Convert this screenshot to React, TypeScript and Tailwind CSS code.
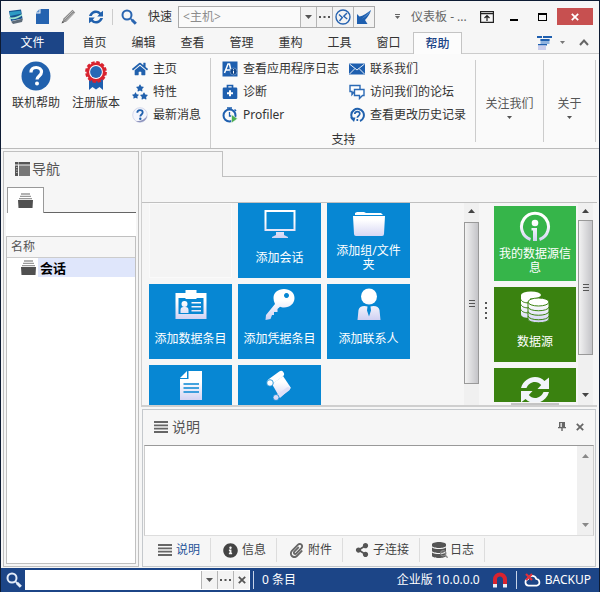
import React, { useState } from 'react';
import { FaDatabase, FaHome, FaInfoCircle, FaPaperclip, FaSearch, FaShareAlt, FaStar } from 'react-icons/fa';

type IconProps = { className?: string };

/* Small glyphs */

const Caret = ({ className = '' }: IconProps) => (
  <svg viewBox="0 0 7 4" className={`h-1 w-[7px] shrink-0 ${className}`} fill="currentColor">
    <path d="M0 0h7L3.5 4z" />
  </svg>
);

const CaretUp = ({ className = '' }: IconProps) => (
  <svg viewBox="0 0 7 4" className={`h-1 w-[7px] shrink-0 ${className}`} fill="currentColor">
    <path d="M0 4h7L3.5 0z" />
  </svg>
);

const TinyCaret = () => (
  <svg viewBox="0 0 5 3" className="h-[3px] w-[5px] shrink-0" fill="currentColor">
    <path d="M0 0h5L2.5 3z" />
  </svg>
);

const Dots = () => (
  <svg viewBox="0 0 11 2" className="h-[2px] w-[11px]" fill="currentColor">
    <path d="M0 0h2v2H0zM4.5 0h2v2h-2zM9 0h2v2H9z" />
  </svg>
);

const Cross = ({ className = '' }: IconProps) => (
  <svg viewBox="0 0 10 10" className={`size-2 shrink-0 ${className}`} fill="none" stroke="currentColor" strokeWidth="2.2">
    <path d="M1 1l8 8M9 1L1 9" />
  </svg>
);

const Lines = ({ className = '' }: IconProps) => (
  <svg viewBox="0 0 14 12" className={`h-3 w-3.5 shrink-0 ${className}`} stroke="currentColor" strokeWidth="1.8">
    <path d="M0 1h14M0 4.3h14M0 7.7h14M0 11h14" />
  </svg>
);

const SyncIcon = ({ className = '', fill = 'currentColor' }: IconProps & { fill?: string }) => (
  <svg viewBox="0 0 30 28" className={`shrink-0 ${className}`} fill={fill}>
    <path d="M1 12C3 5 9 1 15 1c4 0 7 1.5 9.5 4L29 1.5V13H17.500l3.700-4C19.5 7 17.5 6 15 6c-4 0-7 2.5-8.5 6z" />
    <path d="M29 16c-2 7-8 11-14 11-4 0-7-1.5-9.5-4L1 26.500V15h11.500l-3.700 4c1.7 2 3.7 3 6.200 3 4 0 7-2.5 8.5-6z" />
  </svg>
);

const AppLogo = () => (
  <svg viewBox="0 0 16 16" className="size-4 shrink-0">
    <path d="M1 2l12-1.500 1.500 9L3 12z" fill="#17528f" />
    <path d="M1.500 3l11-1.300.5 3L2 7z" fill="#2d9bc4" />
    <path d="M1 8c4 1.500 8 0 13-3l.3 1.500C10 9.500 6 11 1.500 9.800z" fill="#9fe6cf" />
    <path d="M3 12.500l12-3-1 3.500-9 2z" fill="#5d6b78" />
  </svg>
);

const NewFile = () => (
  <svg viewBox="0 0 13 15" className="h-[15px] w-[13px] shrink-0">
    <path d="M4.500 0H13v15H0V4.500h4.500z" fill="#2563b0" />
    <path d="M3.500 0v3.500H0z" fill="#5f92cf" />
  </svg>
);

const Pencil = () => (
  <svg viewBox="0 0 15 15" className="size-[15px] shrink-0">
    <path d="M1 14l1.500-4.500L11.500.8 14.200 3.500 5.500 12.500z" fill="#8a8a8a" />
    <path d="M3.500 10.500l8.500-8.500M4.800 11.800l8-8" stroke="#ddd" strokeWidth=".6" />
    <path d="M.5 14.500l1-2.500 1.500 1.500z" fill="#555" />
  </svg>
);

const Magnifier = ({ className = '' }: IconProps) => (
  <svg viewBox="0 0 16 16" className={`size-4 shrink-0 ${className}`} fill="none" stroke="currentColor">
    <circle cx="6" cy="6" r="4.500" strokeWidth="2" />
    <path d="M9 9l2 2" strokeWidth="1.6" />
    <path d="M10.800 10.800l4 4" strokeWidth="3" />
  </svg>
);

const RemoteIcon = () => (
  <svg viewBox="0 0 16 16" className="size-4" fill="none" stroke="#2763b0" strokeWidth="1.4">
    <circle cx="8" cy="8" r="7" />
    <path d="M4 5.500L7.300 8.500 4.500 12M12 4L8.800 7.300 12.200 10" />
  </svg>
);

const ArrowSwoosh = () => (
  <svg viewBox="0 0 16 16" className="size-4" fill="#1e5faf">
    <path d="M1 15V5l2.500 2.500C7 7 11 4 15 1c-1 4-3.500 7.500-6 10l2.500 4z" />
    <path d="M15 1C12 4.500 9 7.500 5.500 10c4-2 7.500-5 9.500-9z" fill="#79a5d8" />
  </svg>
);

const RibbonToggle = () => (
  <svg viewBox="0 0 14 12" className="h-3 w-3.5" fill="none" stroke="#222" strokeWidth="1.2">
    <path d="M.6.6h12.800v10.800H.6zM.6 2.600h12.800M7 10V5M4.500 7L7 4.600 9.500 7" />
  </svg>
);

const LayoutIcon = () => (
  <svg viewBox="0 0 16 16" className="size-4">
    <path d="M1 1h5v2H1zM7 1h9v2H7z" fill="#1e5faf" />
    <path d="M4.500 4h9v5h-9z" fill="#8fb2de" />
    <path d="M4.500 4h9v2h-9zM2 9h9v1.500H2z" fill="#1e5faf" />
    <path d="M2 10.500h8V15H2z" fill="#c9cdec" />
  </svg>
);

/* Ribbon icons */

const HelpBig = () => (
  <svg viewBox="0 0 30 30" className="size-[30px]">
    <circle cx="15" cy="15" r="14.500" fill="#2161ad" />
    <path d="M10 11.500c0-3.500 2.300-5 5.200-5s5.300 1.600 5.300 4.600c0 3.700-4.500 4-4.500 7.400" fill="none" stroke="#fff" strokeWidth="3.2" />
    <circle cx="16" cy="22.500" r="2" fill="#fff" />
  </svg>
);

const Rosette = () => (
  <svg viewBox="0 0 24 30" className="h-[30px] w-6">
    <path d="M5 18v11l3.500-3 3.500 2.500 3.500-2.500 3.500 3V18z" fill="#1e5faf" />
    <circle cx="12" cy="11" r="9.700" fill="none" stroke="#d8232f" strokeWidth="2.4" strokeDasharray="3.4 1.680" />
    <circle cx="12" cy="11" r="9.600" fill="#d8232f" />
    <circle cx="12" cy="11" r="6.900" fill="#fff" />
    <circle cx="12" cy="11" r="5.900" fill="#2768b5" />
  </svg>
);

const Stars = () => (
  <span className="flex size-4 shrink-0 flex-col items-center text-[#2161ad]">
    <FaStar className="size-2" />
    <span className="flex w-4 justify-between">
      <FaStar className="size-[7px]" />
      <FaStar className="size-2" />
    </span>
  </span>
);

const NewsIcon = () => (
  <svg viewBox="0 0 16 16" className="size-4 shrink-0">
    <circle cx="8" cy="8" r="7.300" fill="#f4f5fc" stroke="#d5d8ea" />
    <path d="M15 8.500a7 7 0 0 1-11 5.500c4.500.5 9-1.500 11-5.500z" fill="#8f95bd" />
    <path d="M5.300 5.800c0-1.800 1.200-2.600 2.700-2.600s2.700.8 2.700 2.300c0 1.900-2.400 2-2.400 4" fill="none" stroke="#2161ad" strokeWidth="1.800" />
    <circle cx="8.300" cy="11.800" r="1.200" fill="#2161ad" />
  </svg>
);

const LogIcon = () => (
  <svg viewBox="0 0 16 16" className="size-4 shrink-0">
    <path d="M.5.5h15v15H.5z" fill="#1e5faf" />
    <path d="M2.500 12L6 3h1.500L9.500 12M4 9h4" fill="none" stroke="#fff" strokeWidth="1.5" />
    <circle cx="11.500" cy="10.500" r="3.500" fill="#12468a" stroke="#6d9bd1" strokeWidth=".8" />
    <path d="M11.500 8.300v1M11.500 10v2.500" stroke="#fff" />
  </svg>
);

const FirstAid = () => (
  <svg viewBox="0 0 16 16" className="size-4 shrink-0">
    <path d="M5.500 4V1.500h5V4" fill="none" stroke="#1e5faf" strokeWidth="1.7" />
    <rect x=".7" y="3.500" width="14.600" height="11.500" rx="1.200" fill="#1e5faf" />
    <path d="M8 6.200v6M5 9.200h6" stroke="#fff" strokeWidth="2" />
  </svg>
);

const ProfilerIcon = () => (
  <svg viewBox="0 0 16 16" className="size-4 shrink-0" fill="none">
    <path d="M5 1h5M7.500 1v2M12.500 2.500l1.500 1.500" stroke="#1e5faf" strokeWidth="1.5" />
    <circle cx="7.500" cy="8.500" r="6" stroke="#1e5faf" strokeWidth="2" />
    <path d="M7.500 5v4h2" stroke="#1e5faf" strokeWidth="1.3" />
    <path d="M9.500 7.500l6 4.300-6 4.200z" fill="#4caf50" stroke="#fafafa" strokeWidth=".6" />
  </svg>
);

const MailIcon = () => (
  <svg viewBox="0 0 16 12" className="h-3 w-4 shrink-0">
    <path d="M0 .5h16v11H0z" fill="#1e5faf" />
    <path d="M.5 1l7.500 6L15.500 1M.5 11l5.500-5.500M15.500 11L10 5.500" fill="none" stroke="#fff" strokeWidth=".9" />
  </svg>
);

const ForumIcon = () => (
  <svg viewBox="0 0 16 16" className="size-4 shrink-0" fill="#fff" stroke="#2b6ab5" strokeWidth="1.4">
    <path d="M1 1.500h10v6H5.500L3 10.500v-3H1z" />
    <path d="M5.500 5.500H15v6h-1.500l-3 3v-3h-5z" />
  </svg>
);

const HistoryIcon = () => (
  <svg viewBox="0 0 16 16" className="size-4 shrink-0" fill="none" stroke="#2161ad">
    <path d="M4 12.500A6.300 6.300 0 1 1 11 14" strokeWidth="2" />
    <path d="M5.800 7c0-3.200 5-3 5-.2 0 2-2.500 2-2.500 4M8.300 12v2" strokeWidth="1.7" />
    <path d="M1 10.500h5.500L5 15z" fill="#2161ad" stroke="none" />
  </svg>
);

/* Panel icons */

const NavIcon = () => (
  <svg viewBox="0 0 15 14" className="h-3.5 w-[15px] shrink-0">
    <path d="M0 0h3v2.500H0zM3.500 0H15v2.500H3.500zM0 3.500h3V14H0z" fill="#555" />
    <path d="M4 3.500h11V14H4z" fill="#777" />
    <path d="M1 5.500h1.500M1 8h1.500M1 10.500h1.500" stroke="#ddd" strokeWidth=".7" />
  </svg>
);

const StackIcon = () => (
  <svg viewBox="0 0 15 15" className="size-[15px] shrink-0">
    <path d="M3 1h9M2 3.300h11M1 5.600h13" stroke="#999" strokeWidth="1.3" />
    <path d="M0 7h15l-.5 8H.5z" fill="#505050" />
  </svg>
);

const PinIcon = () => (
  <svg viewBox="0 0 8 9" className="h-[9px] w-2" fill="#666">
    <path d="M1 0h6v5h1v1.300H4.700V9H3.300V6.300H0V5h1zM2.500 1v4h1.300V1z" />
  </svg>
);

const LogsTabIcon = () => (
  <span className="relative flex text-[#555]">
    <FaDatabase className="h-4 w-3.5" />
    <FaSearch className="absolute -right-0.5 bottom-0 size-2 text-[#888]" />
  </span>
);

const MagnetIcon = () => (
  <svg viewBox="0 0 16 16" className="size-4 shrink-0" fill="none" strokeWidth="4">
    <path d="M3 12V7.500a5 5 0 0 1 10 0V12" stroke="#d8232f" />
    <path d="M3 12v3.500M13 12v3.500" stroke="#e8ecf5" />
  </svg>
);

const CloudIcon = () => (
  <svg viewBox="0 0 17 14" className="h-3.5 w-[17px] shrink-0" fill="none">
    <path d="M4.500 12.700a3.300 3.300 0 0 1-.5-6.500 4.300 4.300 0 0 1 8.300-.2 3.400 3.400 0 0 1 .5 6.700z" stroke="#fff" strokeWidth="1.7" />
    <path d="M2 1l6 6M8 1L2 7" stroke="#e0303c" strokeWidth="2.2" />
  </svg>
);

/* Tile icons, all shaded white to lavender */

function Glyph({ children }: { children: React.ReactNode }) {
  return (
    <svg viewBox="0 0 32 32" className="size-8 shrink-0" fill="url(#shade)">
      <defs>
        <linearGradient id="shade" x1="0" y1="0" x2="0" y2="32" gradientUnits="userSpaceOnUse">
          <stop offset=".4" stopColor="#fff" />
          <stop offset="1" stopColor="#cfd0f2" />
        </linearGradient>
      </defs>
      {children}
    </svg>
  );
}

const glyphs = {
  monitor: (
    <Glyph>
      <path fillRule="evenodd" d="M.5 3h31v21H.5zM2.500 5v17h27V5zM12 25h8v3l4 2v1H8v-1l4-2z" />
    </Glyph>
  ),
  folder: (
    <Glyph>
      <path d="M2 8V6l2-1h7l2 1h15l2 2zM0 9h32l-1 18q0 2-2 2H3q-2 0-2-2z" />
    </Glyph>
  ),
  badge: (
    <Glyph>
      <path fillRule="evenodd" d="M.5 5h10V2h11v3h10v26H.5zm3 5v16h25V10h-7v1h-11v-1z" />
      <circle cx="9.500" cy="16" r="3" />
      <path d="M5.500 25v-3q0-3 3-3h2q3 0 3 3v3zM16.500 14H26v1.400h-9.500zM16.500 18H26v1.400h-9.500zM16.500 22H26v1.400h-9.500z" />
    </Glyph>
  ),
  key: (
    <Glyph>
      <path
        fillRule="evenodd"
        d="M20 1c6 0 10.500 3.500 10.500 9S26 19.500 20 19.500c-2 0-3-.4-4-.8L13.500 21v3H10v3H8l-1.500 4-5 1 .5-5L11 16c-1-2-1.500-4-1.500-6C9.500 4.500 14 1 20 1zm2.500 4a2.500 2.500 0 1 0 .01 0z"
      />
    </Glyph>
  ),
  person: (
    <Glyph>
      <circle cx="16" cy="8.500" r="8" />
      <path d="M4.500 32l1-10q1-4 6-4l3 .5-.5 4 2 6 2-6-.5-4 3-.5q5 0 6 4l1 10z" />
    </Glyph>
  ),
  document: (
    <Glyph>
      <path d="M13.500 2h13.500v29H5V10h8.500z" />
      <path d="M12 2v7H5z" fill="#fff" />
      <path d="M8.500 15h15.500M8.500 19h15.500M8.500 23h15.500" stroke="#0787d3" strokeWidth="1.3" />
    </Glyph>
  ),
  script: (
    <Glyph>
      <path d="M8 15l11-8 8 12-11 10z" />
      <path d="M6 13L17 5" stroke="#fff" strokeWidth="6" strokeLinecap="round" />
      <circle cx="6" cy="14" r="3.300" stroke="#0787d3" strokeWidth=".8" />
      <path d="M13 28l11-8" stroke="#dfe0f7" strokeWidth="4" strokeLinecap="round" />
      <circle cx="12" cy="28.500" r="3" stroke="#0787d3" strokeWidth=".8" />
    </Glyph>
  ),
  info: (
    <Glyph>
      <path d="M11.500 29.500a13.500 13.500 0 1 1 9 0" fill="none" stroke="url(#shade)" strokeWidth="3" />
      <circle cx="16" cy="13" r="3.300" />
      <path d="M12.500 18H18v13h-4V20.500h-1.500z" />
    </Glyph>
  ),
  database: (
    <Glyph>
      <path d="M2 4v19c0 3 4 4 9 4V4z" />
      <ellipse cx="12" cy="4" rx="10" ry="3.500" fill="#fff" />
      <path d="M2 8.500c1 3 5 3.500 9 3.500M2 13.500c1 3 5 3.500 9 3.500M2 18.500c1 3 5 3.500 9 3.500" fill="none" stroke="#3a8210" />
      <path d="M9 11v17c0 5 21 5 21 0V11z" stroke="#3a8210" />
      <ellipse cx="19.500" cy="11" rx="10.500" ry="4" fill="#fff" stroke="#3a8210" />
      <path d="M9 16c1 5 20 5 21 0M9 20.500c1 5 20 5 21 0M9 25c1 5 20 5 21 0" fill="none" stroke="#3a8210" />
    </Glyph>
  ),
};

const blueTiles = [
  null,
  { icon: glyphs.monitor, label: '添加会话' },
  { icon: glyphs.folder, label: '添加组/文件夹' },
  { icon: glyphs.badge, label: '添加数据条目' },
  { icon: glyphs.key, label: '添加凭据条目' },
  { icon: glyphs.person, label: '添加联系人' },
  { icon: glyphs.document, label: '' },
  { icon: glyphs.script, label: '' },
];

const greenTiles = [
  { icon: glyphs.info, label: '我的数据源信息', color: 'bg-[#36b54a]' },
  { icon: glyphs.database, label: '数据源', color: 'bg-[#3a8210]' },
  { icon: <SyncIcon className="mt-1 h-7 w-[30px]" fill="#f2f5fa" />, label: '', color: 'bg-[#3a8210]' },
];

function Tile({ icon, label, color }: { icon: React.ReactNode; label: string; color: string }) {
  return (
    <button className={`flex h-[75px] w-full flex-col items-center px-1 pt-1 pb-0.5 text-white ${color}`}>
      {icon}
      <span className="flex flex-1 items-center text-center leading-[14px]">{label}</span>
    </button>
  );
}

interface ScrollBarProps {
  thumb: string;
  margin: string;
  end?: boolean;
}

function ScrollBar({ thumb, margin, end }: ScrollBarProps) {
  return (
    <div className={`flex w-[15px] shrink-0 flex-col items-center bg-[#f0f0f0] pt-1.5 pb-2 text-[#444] ${margin}`}>
      <CaretUp />
      <div className={`flex w-full flex-col items-center justify-center gap-0.5 border border-[#999] bg-linear-to-r from-[#f2f2f2] to-[#c4c4c8] ${thumb}`}>
        <span className="h-px w-1.5 bg-[#555]" />
        <span className="h-px w-1.5 bg-[#555]" />
        <span className="h-px w-1.5 bg-[#555]" />
      </div>
      {end && <Caret className="mt-auto" />}
    </div>
  );
}

const comboButton = 'flex items-center justify-center border-l border-[#b5b5b5] bg-[#f3f3f3] text-[#555]';

function TitleBar() {
  return (
    <header className="flex h-[31px] shrink-0 items-center pr-1.5 pl-[7px]">
      <div className="flex items-center gap-3">
        <AppLogo />
        <button aria-label="新建"><NewFile /></button>
        <button aria-label="编辑"><Pencil /></button>
        <button aria-label="刷新" className="text-[#2161ad]"><SyncIcon className="h-3.5 w-4" /></button>
      </div>
      <span className="ml-2 h-4 w-px bg-[#ccc]" />
      <Magnifier className="ml-2 text-[#2a65b0]" />
      <label htmlFor="host" className="ml-[11px]">快速</label>
      <div className="ml-1.5 flex h-[22px] shrink-0 border border-[#aaa] bg-[#fafafa]">
        <input id="host" placeholder="<主机>" className="w-[121px] px-1 outline-none placeholder:text-[#8c8c8c]" />
        <button aria-label="展开" className={`w-4 ${comboButton}`}><Caret /></button>
        <button aria-label="浏览" className={`w-4 ${comboButton}`}><Dots /></button>
        <button aria-label="远程" className={`w-[21px] ${comboButton}`}><RemoteIcon /></button>
        <button aria-label="连接" className={`w-[21px] ${comboButton}`}><ArrowSwoosh /></button>
      </div>
      <button aria-label="自定义" className="ml-5 flex flex-col items-center gap-px text-[#666]">
        <span className="h-px w-[5px] bg-[#666]" />
        <TinyCaret />
      </button>
      <h1 className="ml-[11px] flex-1 truncate text-[#666]">仪表板 - ...</h1>
      <button aria-label="功能区"><RibbonToggle /></button>
      <button aria-label="最小化" className="ml-4 flex h-2 w-2 items-end"><span className="h-0.5 w-2 bg-black" /></button>
      <button aria-label="最大化" className="ml-5 h-2 w-[9px] border border-t-2 border-black" />
      <button aria-label="关闭" className="ml-2.5 flex h-[17px] w-9 items-center justify-center bg-[#c75050] text-white">
        <Cross />
      </button>
    </header>
  );
}

const menu = ['首页', '编辑', '查看', '管理', '重构', '工具', '窗口', '帮助'];

function MenuTabs() {
  const [active, setActive] = useState('帮助');
  return (
    <nav className="flex h-[22px] shrink-0">
      <button className="w-[63px] bg-[#1c4587] text-white">文件</button>
      <div className="w-1.5 border-b border-[#ccc]" />
      {menu.map(name => (
        <button
          key={name}
          onClick={() => setActive(name)}
          className={`w-[49px] ${
            name === active
              ? 'border border-b-0 border-[#c4c4c4] bg-[#fcfcfc] font-medium text-[#1c4587]'
              : 'border-b border-[#ccc]'
          }`}
        >
          {name}
        </button>
      ))}
      <div className="flex flex-1 items-center justify-end border-b border-[#ccc] pr-2.5">
        <button aria-label="布局" className="flex items-center gap-2 text-[#777]">
          <LayoutIcon />
          <TinyCaret />
        </button>
        <button aria-label="折叠" className="ml-3.5 text-[#666]">
          <svg viewBox="0 0 10 7" className="h-[7px] w-2.5" fill="none" stroke="currentColor" strokeWidth="2"><path d="M1 6l4-4.500L9 6" /></svg>
        </button>
      </div>
    </nav>
  );
}

function SmallItem({ icon, label }: { icon: React.ReactNode; label: string }) {
  return (
    <button className="flex h-[23px] items-center gap-[5px] whitespace-nowrap">
      {icon}
      <span>{label}</span>
    </button>
  );
}

function RibbonBar() {
  return (
    <section className="flex h-[95px] shrink-0 border-b border-[#bbb] bg-[#fafafa] text-[#333]">
      <button className="ml-2.5 flex w-[50px] flex-col items-center gap-1 self-start pt-[7px]">
        <HelpBig />
        <span className="whitespace-nowrap">联机帮助</span>
      </button>
      <button className="ml-2.5 flex w-[50px] flex-col items-center gap-1 self-start pt-[7px]">
        <Rosette />
        <span className="whitespace-nowrap">注册版本</span>
      </button>
      <div className="ml-[11px] flex w-[78px] flex-col pt-[3px]">
        <SmallItem icon={<FaHome className="size-4 text-[#2161ad]" />} label="主页" />
        <SmallItem icon={<Stars />} label="特性" />
        <SmallItem icon={<NewsIcon />} label="最新消息" />
      </div>
      <div className="mt-1 flex w-[265px] flex-col border-l border-[#ccc] pl-[11px]">
        <div className="-mt-px flex">
          <div className="flex w-[127px] flex-col">
            <SmallItem icon={<LogIcon />} label="查看应用程序日志" />
            <SmallItem icon={<FirstAid />} label="诊断" />
            <SmallItem icon={<ProfilerIcon />} label="Profiler" />
          </div>
          <div className="flex flex-col">
            <SmallItem icon={<MailIcon />} label="联系我们" />
            <SmallItem icon={<ForumIcon />} label="访问我们的论坛" />
            <SmallItem icon={<HistoryIcon />} label="查看更改历史记录" />
          </div>
        </div>
        <h2 className="mt-1.5 pr-2.5 text-center leading-4">支持</h2>
      </div>
      <button className="my-1.5 flex w-[68px] flex-col items-center justify-center gap-1 border-l border-[#ccc] pt-3 text-[#555]">
        关注我们
        <TinyCaret />
      </button>
      <button className="my-1.5 flex w-[53px] flex-col items-center justify-center gap-1 border-x border-[#ccc] pt-3 text-[#555]">
        关于
        <TinyCaret />
      </button>
    </section>
  );
}

function NavPanel() {
  return (
    <aside className="flex w-[136px] shrink-0 flex-col border border-[#c0c0c0] p-0.5">
      <h2 className="flex h-[33px] items-center gap-0.5 pb-1 pl-[9px] text-sm text-[#555]">
        <NavIcon />
        导航
      </h2>
      <div className="flex h-[26px] pl-px">
        <button aria-label="会话" className="flex w-[37px] items-center justify-center border border-b-0 border-[#999] bg-white">
          <StackIcon />
        </button>
        <div className="flex-1 border-b border-[#666]" />
      </div>
      <div className="h-[23px] bg-white" />
      <div className="flex-1 border border-[#c0c0c0] bg-white">
        <h3 className="flex h-[21px] items-center border-b border-[#ccc] bg-[#f6f6f6] pl-1 text-[#555]">名称</h3>
        <button className="flex h-[19px] w-full items-center pl-3.5">
          <StackIcon />
          <span className="ml-0.5 flex h-full flex-1 items-center bg-[#dfe6fb] pl-0.5 text-[13px] font-bold text-black">会话</span>
        </button>
      </div>
    </aside>
  );
}

function Dashboard() {
  return (
    <section className="flex min-h-0 flex-1 flex-col overflow-hidden border-b-2 border-l border-[#cfcfcf]">
      <div className="flex h-[26px] shrink-0">
        <div className="w-20 border-t border-[#c0c0c0]" />
        <div className="flex-1 border-b border-l border-[#c0c0c0]" />
      </div>
      <div className="h-[25px] shrink-0" />
      <div className="flex min-h-0 flex-1 border-t border-[#c0c0c0]">
        <div className="flex-1 overflow-hidden pl-[7px]">
          <div className="grid grid-cols-[repeat(3,83px)] gap-1.5">
            {blueTiles.map((tile, i) =>
              tile ? <Tile key={i} {...tile} color="bg-[#0787d3]" /> : <div key={i} className="border border-[#fafafa] bg-[#f4f4f4]" />
            )}
          </div>
        </div>
        <ScrollBar thumb="mt-[9px] h-[162px]" margin="mr-1" />
        <div className="flex w-[5px] flex-col items-center justify-center gap-[3px] pt-3">
          {[0, 1, 2, 3].map(i => <span key={i} className="size-0.5 bg-[#555]" />)}
        </div>
        <div className="ml-1.5 flex w-[82px] flex-col overflow-hidden pt-[3px]">
          <div className="flex min-h-0 flex-1 flex-col gap-1.5 overflow-hidden">
            {greenTiles.map((tile, i) => (
              <div key={i} className="shrink-0"><Tile {...tile} /></div>
            ))}
          </div>
          <div className="mx-auto mt-px h-0.5 w-12 shrink-0 bg-[#c4c4c4]" />
        </div>
        <ScrollBar thumb="mt-[7px] h-[135px]" margin="ml-0.5 mr-1" end />
      </div>
    </section>
  );
}

const detailTabs = [
  { name: '说明', icon: <Lines className="text-[#666]" /> },
  { name: '信息', icon: <FaInfoCircle className="size-[15px] text-[#444]" /> },
  { name: '附件', icon: <FaPaperclip className="size-[15px] text-[#666]" /> },
  { name: '子连接', icon: <FaShareAlt className="size-3.5 text-[#555]" /> },
  { name: '日志', icon: <LogsTabIcon /> },
];

function DetailPanel() {
  const [active, setActive] = useState('说明');
  return (
    <section className="mr-px ml-px flex h-[158px] shrink-0 flex-col border border-[#c4c8cc] px-px pb-0.5">
      <div className="flex h-[35px] items-center pr-2.5 pb-0.5 pl-2.5 text-[#666]">
        <Lines />
        <h2 className="ml-1 flex-1 text-sm text-[#555]">说明</h2>
        <button aria-label="固定"><PinIcon /></button>
        <button aria-label="关闭" className="ml-2.5"><Cross /></button>
      </div>
      <div className="flex flex-1 border border-t-[#999] border-r-[#ccc] border-b-[#ddd] border-l-[#ccc] bg-white">
        <textarea aria-label="说明" className="flex-1 resize-none bg-white p-1 outline-none" />
        <div className="flex w-4 flex-col items-center justify-between bg-[#f0f0f0] py-2 text-[#888]">
          <CaretUp />
          <Caret />
        </div>
      </div>
      <div className="flex h-7 items-center pl-0.5">
        {detailTabs.map(tab => (
          <button
            key={tab.name}
            onClick={() => setActive(tab.name)}
            className={`flex h-6 items-center gap-1 border-r border-[#ddd] pr-2.5 pl-3 ${tab.name === active ? 'text-[#1f5299]' : 'text-[#444]'}`}
          >
            {tab.icon}
            {tab.name}
          </button>
        ))}
      </div>
    </section>
  );
}

function StatusBar() {
  return (
    <footer className="flex h-6 shrink-0 items-center bg-[#1c4587] pr-2 pl-[5px] text-white">
      <Magnifier className="text-[#e4ecf8]" />
      <div className="ml-[3px] flex h-5 bg-white p-px">
        <input autoFocus aria-label="搜索" className="w-[175px] px-0.5 text-black outline-none" />
        <button aria-label="展开" className={`w-4 ${comboButton}`}><Caret /></button>
        <button aria-label="浏览" className={`w-4 ${comboButton}`}><Dots /></button>
        <button aria-label="清除" className={`w-4 ${comboButton}`}><Cross /></button>
      </div>
      <span className="ml-[3px] h-[18px] w-px bg-[#c8d4e8]" />
      <span className="ml-2 flex-1">0 条目</span>
      <span>企业版 10.0.0.0</span>
      <span className="ml-3"><MagnetIcon /></span>
      <span className="ml-2 h-[18px] w-px bg-[#c8d4e8]" />
      <button className="ml-[7px] flex items-center gap-1">
        <CloudIcon />
        BACKUP
      </button>
    </footer>
  );
}

export default function App() {
  return (
    <div className="flex h-screen flex-col overflow-hidden border border-b-0 border-[#0d1b33] bg-[#f6f6f6] font-['Noto_Sans','Noto_Sans_CJK_SC',sans-serif] text-xs leading-4 text-[#333]">
      <TitleBar />
      <MenuTabs />
      <RibbonBar />
      <main className="flex min-h-0 flex-1 gap-0.5 px-0.5 pt-0.5 pb-px">
        <NavPanel />
        <div className="flex min-w-0 flex-1 flex-col gap-0.5">
          <Dashboard />
          <DetailPanel />
        </div>
      </main>
      <StatusBar />
    </div>
  );
}
